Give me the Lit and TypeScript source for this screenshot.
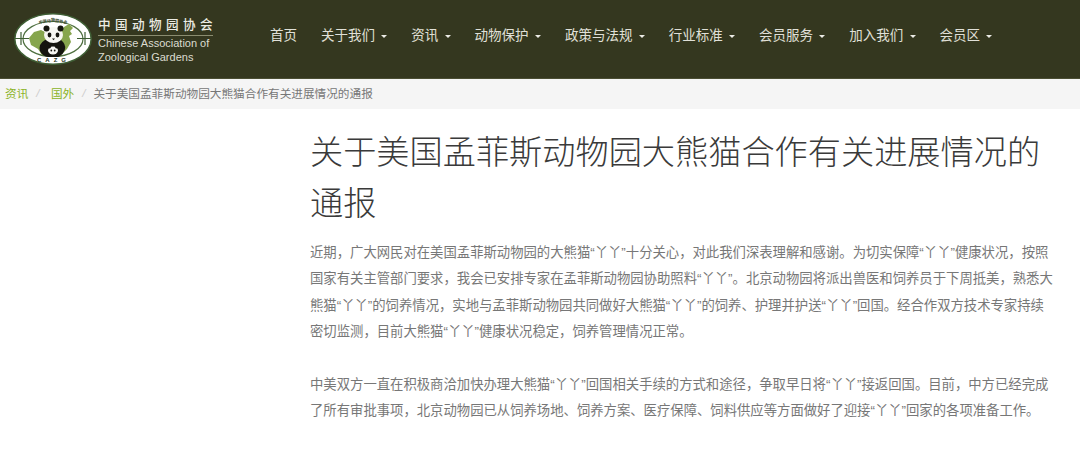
import { LitElement, html, css } from "lit";
import { customElement } from "lit/decorators.js";

const NAV: [string, boolean][] = [
  ["首页", false], ["关于我们", true], ["资讯", true], ["动物保护", true], ["政策与法规", true],
  ["行业标准", true], ["会员服务", true], ["加入我们", true], ["会员区", true],
];

const P1 = "近期，广大网民对在美国孟菲斯动物园的大熊猫“丫丫”十分关心，对此我们深表理解和感谢。为切实保障“丫丫”健康状况，按照国家有关主管部门要求，我会已安排专家在孟菲斯动物园协助照料“丫丫”。北京动物园将派出兽医和饲养员于下周抵美，熟悉大熊猫“丫丫”的饲养情况，实地与孟菲斯动物园共同做好大熊猫“丫丫”的饲养、护理并护送“丫丫”回国。经合作双方技术专家持续密切监测，目前大熊猫“丫丫”健康状况稳定，饲养管理情况正常。";
const P2 = "中美双方一直在积极商洽加快办理大熊猫“丫丫”回国相关手续的方式和途径，争取早日将“丫丫”接返回国。目前，中方已经完成了所有审批事项，北京动物园已从饲养场地、饲养方案、医疗保障、饲料供应等方面做好了迎接“丫丫”回家的各项准备工作。";

@customElement("app-root")
export class AppRoot extends LitElement {
  static styles = css`
    :host { display: block; width: 1080px; height: 450px; overflow: hidden; background: #fff;
      font-family: "Liberation Sans", "Noto Sans CJK SC", sans-serif; }
    .top { height: 78px; background: #34371f; border-bottom: 1px solid #4b4e33; display: flex; align-items: flex-start; }
    .brand { width: 270px; flex: none; display: flex; padding: 13px 0 0 14px; box-sizing: border-box; gap: 6px; }
    .brand svg { flex: none; }
    .bt { width: 115px; color: #e4e4da; }
    .cn { font-size: 12.6px; line-height: 18px; letter-spacing: 4.4px; white-space: nowrap; border-bottom: 1px solid #8a8c70; padding: 3px 0 1px; font-weight: 500; color: #ecece4; }
    .en { font-size: 11px; line-height: 14px; white-space: nowrap; color: #dcdcd0; }
    nav { display: flex; padding-top: 26px; gap: 24px; color: #e0e0d8; font-size: 13.5px; line-height: 19px; white-space: nowrap; }
    .item { display: flex; align-items: center; }
    .caret { width: 0; height: 0; border: 3.5px solid transparent; border-top-color: #ecece6; border-bottom: 0; margin: 2px 0 0 6.3px; }
    .crumb { height: 30px; background: #f5f5f5; display: flex; align-items: center; padding: 0 0 3px 5px; box-sizing: border-box; font-size: 11.65px; color: #777; white-space: nowrap; }
    .crumb a { color: #8bb326; }
    .crumb i { color: #ccc; padding: 0 8px; }
    .crumb i:first-of-type { padding-right: 11.4px; }
    main { padding: 18px 25px 0 310px; }
    h1 { margin: 0; font-size: 33.2px; line-height: 51px; font-weight: 300; color: #3a3a3a; }
    p { margin: 0; font-size: 13.35px; line-height: 26.4px; color: #777; }
    h1 + p { margin-top: 11px; }
    p + p { margin-top: 26px; }
  `;

  render() {
    return html`
      <div class="top">
        <div class="brand">
          <svg width="78" height="52" viewBox="0 0 78 52">
            <defs><path id="arc" d="M10 22 A31 20 0 0 1 68 22"/></defs>
            <ellipse cx="39" cy="26" rx="38.2" ry="25.200" fill="#fff" stroke="#3f5f35" stroke-width="1.5"/>
            <ellipse cx="39" cy="26" rx="30" ry="17.500" fill="#fff" stroke="#4f7040" stroke-width="1.2"/>
            <path d="M1 25.500h14M63 25.500h14M7 19v13M71 19v13" stroke="#3f5f35" stroke-width="1.200"/>
            <path d="M15 25L20 19L27 17L33 20L40 19L47 18L50 14L55 11L59 15L56 18L58 21L55 23L57 29L53 36L48 41L38 43L28 42L24 36L17 32Z" fill="#86a54d"/>
            <path d="M31 27Q24 31 26 38Q28 43 34 44L44 44Q50 41 51 36Q52 31 47 27Z" fill="#15150f"/>
            <ellipse cx="39.500" cy="22" rx="9.500" ry="8" fill="#f6f6f1"/>
            <circle cx="32.500" cy="15.500" r="3" fill="#15150f"/><circle cx="46.500" cy="15.500" r="3" fill="#15150f"/>
            <ellipse cx="35.500" cy="22" rx="1.900" ry="2.400" fill="#15150f"/><ellipse cx="43.500" cy="22" rx="1.900" ry="2.400" fill="#15150f"/>
            <path d="M38 25.500h3l-1.500 1.800z" fill="#15150f"/>
            <ellipse cx="39" cy="37.500" rx="5" ry="4" fill="#f6f6f1"/>
            <circle cx="35.500" cy="34" r="1.400" fill="#15150f"/><circle cx="42.500" cy="34" r="1.400" fill="#15150f"/>
            <circle cx="37.300" cy="37.500" r="0.900" fill="#15150f"/><circle cx="40.700" cy="37.500" r="0.900" fill="#15150f"/>
            <text x="39.500" y="48.500" text-anchor="middle" font-size="6" font-weight="700" letter-spacing="4" fill="#26331c">CAZG</text>
            <text font-size="4" font-weight="700" fill="#33472a"><textPath href="#arc" startOffset="50%" text-anchor="middle">中国动物园协会</textPath></text>
          </svg>
          <div class="bt">
            <div class="cn">中国动物园协会</div>
            <div class="en">Chinese Association of<br>Zoological Gardens</div>
          </div>
        </div>
        <nav>
          ${NAV.map(([t, c]) => html`<div class="item">${t}${c ? html`<span class="caret"></span>` : ""}</div>`)}
        </nav>
      </div>
      <div class="crumb"><a>资讯</a><i>/</i><a>国外</a><i>/</i><span>关于美国孟菲斯动物园大熊猫合作有关进展情况的通报</span></div>
      <main>
        <h1>关于美国孟菲斯动物园大熊猫合作有关进展情况的通报</h1>
        <p>${P1}</p>
        <p>${P2}</p>
      </main>
    `;
  }
}
